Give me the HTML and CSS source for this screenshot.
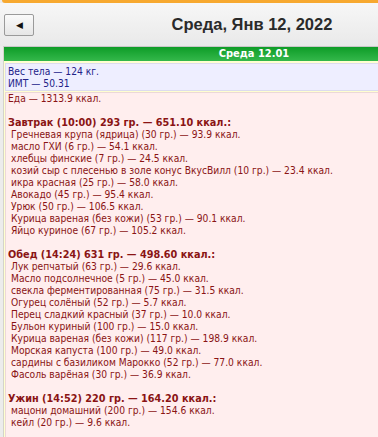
FILE: index.html
```html
<!DOCTYPE html>
<html lang="ru">
<head>
  <meta charset="UTF-8" />
  <title>Дневник питания</title>
  <link rel="stylesheet" href="styles.css">
</head>
<body>
  <div class="topbar"></div>
  <div class="header">
    <button class="back" type="button">&#9664;</button>
    <h1 class="title">Среда, Янв 12, 2022</h1>
  </div>

  <div class="panel">
    <div class="day">Среда 12.01</div>

    <div class="weight">
      Вес тела — 124 кг.<br>
      ИМТ — 50.31
    </div>

    <div class="food">
      <div>Еда — 1313.9 ккал.</div>
      <br>
      <div class="meal">Завтрак (10:00) 293 гр. — 651.10 ккал.:</div>
      <div class="item">Гречневая крупа (ядрица) (30 гр.) — 93.9 ккал.</div>
      <div class="item">масло ГХИ (6 гр.) — 54.1 ккал.</div>
      <div class="item">хлебцы финские (7 гр.) — 24.5 ккал.</div>
      <div class="item">козий сыр с плесенью в золе конус ВкусВилл (10 гр.) — 23.4 ккал.</div>
      <div class="item">икра красная (25 гр.) — 58.0 ккал.</div>
      <div class="item">Авокадо (45 гр.) — 95.4 ккал.</div>
      <div class="item">Урюк (50 гр.) — 106.5 ккал.</div>
      <div class="item">Курица вареная (без кожи) (53 гр.) — 90.1 ккал.</div>
      <div class="item">Яйцо куриное (67 гр.) — 105.2 ккал.</div>
      <br>
      <div class="meal">Обед (14:24) 631 гр. — 498.60 ккал.:</div>
      <div class="item">Лук репчатый (63 гр.) — 29.6 ккал.</div>
      <div class="item">Масло подсолнечное (5 гр.) — 45.0 ккал.</div>
      <div class="item">свекла ферментированная (75 гр.) — 31.5 ккал.</div>
      <div class="item">Огурец солёный (52 гр.) — 5.7 ккал.</div>
      <div class="item">Перец сладкий красный (37 гр.) — 10.0 ккал.</div>
      <div class="item">Бульон куриный (100 гр.) — 15.0 ккал.</div>
      <div class="item">Курица вареная (без кожи) (117 гр.) — 198.9 ккал.</div>
      <div class="item">Морская капуста (100 гр.) — 49.0 ккал.</div>
      <div class="item">сардины с базиликом Марокко (52 гр.) — 77.0 ккал.</div>
      <div class="item">Фасоль варёная (30 гр.) — 36.9 ккал.</div>
      <br>
      <div class="meal">Ужин (14:52) 220 гр. — 164.20 ккал.:</div>
      <div class="item">мацони домашний (200 гр.) — 154.6 ккал.</div>
      <div class="item">кейл (20 гр.) — 9.6 ккал.</div>
      <br>
      <br>
    </div>
  </div>
</body>
</html>
```

FILE: styles.css
```css
html, body {
  overflow: hidden;
}
body {
  margin: 0;
  width: 504px;
  background: #ececec;
  font-family: "DejaVu Sans Condensed", "DejaVu Sans", sans-serif;
  font-size: 10.2px;
}
.topbar {
  height: 3px;
  margin-left: 2px;
  background: #f7a930;
  border-bottom-left-radius: 4px;
}
.header {
  display: flex;
  align-items: center;
  height: 43px;
  padding-left: 4px;
  background: linear-gradient(#f7f7f7, #e9e9e9);
}
.back {
  width: 30px;
  height: 22px;
  padding: 0;
  border: 1px solid #9a9a9a;
  border-radius: 2px;
  background: linear-gradient(#fafafa, #e6e6e6);
  color: #111;
  font-size: 9px;
}
.title {
  flex: 1;
  margin: 0;
  padding-right: 34px;
  text-align: center;
  font-family: "Liberation Sans", Arial, sans-serif;
  font-size: 16.5px;
  font-weight: bold;
  color: #2a2a2a;
}
.panel {
  margin-left: 3px;
  border-top: 1px solid #c8c8c8;
  border-left: 1px solid #d4d4c8;
  background: #ffffd0;
  padding-bottom: 1px;
}
.day {
  height: 14px;
  line-height: 14px;
  text-align: center;
  color: #fff;
  font-weight: bold;
  font-size: 11px;
  background: linear-gradient(#0e9c27, #34b84b);
}
.weight {
  margin: 2px 1px 0 1px;
  padding: 2px 3px 0 2px;
  border: 1px solid #dcdcee;
  background: #eeeeff;
  color: #222288;
  line-height: 12px;
}
.food {
  margin: 1px 1px 0 1px;
  padding: 0 3px 0 2px;
  border: 1px solid #ecd8d8;
  background: #ffeeee;
  color: #8a1414;
  line-height: 12px;
}
.meal {
  font-weight: bold;
  font-size: 10.8px;
}
.item {
  padding-left: 3px;
}
```
